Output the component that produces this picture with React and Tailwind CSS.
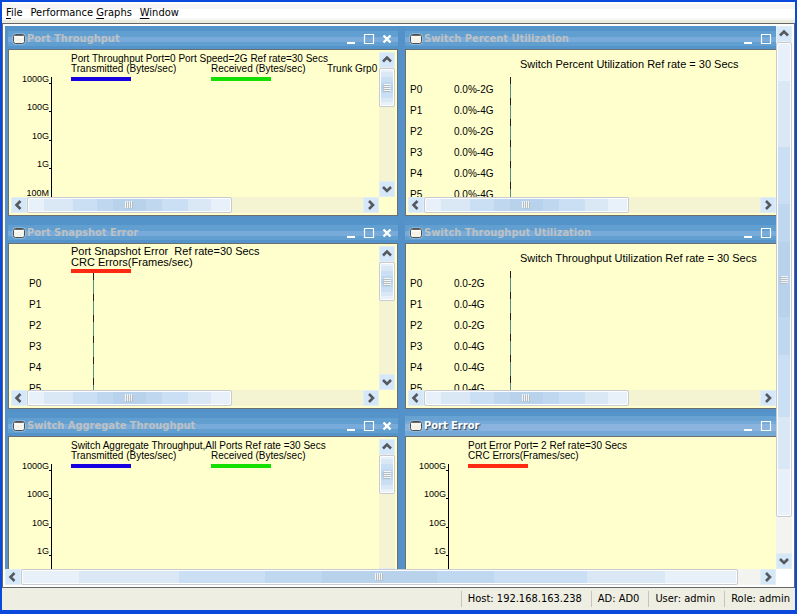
import React from "react";
import clsx from "clsx";

const AXIS = ["1000G", "100G", "10G", "1G", "100M"];

const PORTS = [
  { name: "P0", speed: "2G" },
  { name: "P1", speed: "4G" },
  { name: "P2", speed: "2G" },
  { name: "P3", speed: "4G" },
  { name: "P4", speed: "4G" },
  { name: "P5", speed: "4G" },
];

const TRAFFIC = [
  { label: "Transmitted (Bytes/sec)", color: "bg-[#1400e0]" },
  { label: "Received (Bytes/sec)", color: "bg-[#14e000]" },
];

const CRC = [{ label: "CRC Errors(Frames/sec)", color: "bg-[#ff2a12]" }];

const ARROWS = {
  up: "M4 9.5 8 5.5l4 4",
  down: "M4 6l4 4 4-4",
  left: "M9.5 4 5.5 8l4 4",
  right: "M6 4l4 4-4 4",
};

function ArrowButton({ dir }) {
  return (
    <button aria-label={`Scroll ${dir}`} className="w-4 h-4 shrink-0 bg-[#d5e8fa] border border-[#e4eef0] flex items-center justify-center">
      <svg viewBox="0 0 16 16" className="w-4 h-4 shrink-0">
        <path d={ARROWS[dir]} fill="none" stroke="#55595e" strokeWidth="2.6" />
      </svg>
    </button>
  );
}

function Grip({ vertical }) {
  return (
    <svg viewBox="0 0 8 8" className={clsx("w-2 h-2 shrink-0", vertical && "rotate-90")}>
      <path d="M.5 0v7M2.5 0v7M4.5 0v7M6.5 0v7" stroke="#f4f4f0" />
      <path d="M1.5 1v7M3.5 1v7M5.5 1v7M7.5 1v7" stroke="#b4bcc4" />
    </svg>
  );
}

function HScroll({ thumb, track }) {
  return (
    <div className="flex h-4 min-w-0">
      <ArrowButton dir="left" />
      <div className={clsx("flex-1 min-w-0", track)}>
        <div
          className={clsx(
            "h-4 rounded-[2px] border border-[#c9cbd0] shadow-[inset_0_0_0_1px_#fcfdff] flex items-center justify-center",
            "bg-[linear-gradient(to_right,#e8f0fa_0_8%,#dae8f6_8%_22%,#cadff3_22%_34%,#c0d8ef_34%_42%,#b9d2ec_42%_58%,#c0d8ef_58%_66%,#cadff3_66%_79%,#dae8f6_79%_90%,#e8f0fa_90%)]",
            thumb
          )}
        >
          <Grip />
        </div>
      </div>
      <ArrowButton dir="right" />
    </div>
  );
}

function VScroll({ thumb, track }) {
  return (
    <div className="flex flex-col w-4 min-h-0">
      <ArrowButton dir="up" />
      <div className={clsx("flex-1 min-h-0", track)}>
        <div
          className={clsx(
            "w-4 rounded-[2px] border border-[#c9cbd0] shadow-[inset_0_0_0_1px_#fcfdff] flex items-center justify-center",
            "bg-[linear-gradient(to_bottom,#e8f0fa_0_8%,#dae8f6_8%_22%,#cadff3_22%_34%,#c0d8ef_34%_42%,#b9d2ec_42%_58%,#c0d8ef_58%_66%,#cadff3_66%_79%,#dae8f6_79%_90%,#e8f0fa_90%)]",
            thumb
          )}
        >
          <Grip vertical />
        </div>
      </div>
      <ArrowButton dir="down" />
    </div>
  );
}

function TitleBar({ title, active }) {
  return (
    <div
      className={clsx(
        "h-[23px] pt-[3px] pl-1 pr-0.5 flex items-center text-white",
        active
          ? "bg-[linear-gradient(#5593cb_0_3px,#68a2d3_3px_8px,#74a9d8_8px_11px,#8ab4de_11px_18px,#74a9d8_18px)]"
          : "bg-[linear-gradient(#5593cb_0_5px,#619fd1_5px_11px,#78abda_11px_16px,#619fd1_16px_20px,#5593cb_20px)]"
      )}
    >
      <svg viewBox="0 0 14 12" className="w-3.5 h-3 shrink-0">
        <rect x=".5" y=".5" width="13" height="11" rx="3" fill="#a9cbe8" />
        <rect x="1.500" y="1.500" width="11" height="9" rx="2" fill="#f4f3ea" stroke="#4c5055" />
        <path d="M2.500 2.500h9" stroke="#6b6b66" />
        <path d="M3 4h8" stroke="#fff" />
      </svg>
      <h2
        className={clsx(
          "flex-1 pl-px text-[11px] leading-4 font-bold whitespace-nowrap",
          active ? "text-white [text-shadow:1px_1px_1px_#24405c]" : "text-[#bdc1c4]"
        )}
      >
        {title}
      </h2>
      <button aria-label="Minimize" className="w-[18px] h-4 flex items-center justify-center">
        <svg viewBox="0 0 12 12" className="w-3 h-3"><path d="M2 10h8" stroke="currentColor" strokeWidth="2" /></svg>
      </button>
      <button aria-label="Maximize" className="w-[18px] h-4 flex items-center justify-center">
        <svg viewBox="0 0 12 12" className="w-3 h-3"><path d="M1.5 1.500v9h9v-9M1 1.500h10" fill="none" stroke="currentColor" strokeWidth="1.2" /></svg>
      </button>
      <button aria-label="Close" className="w-[18px] h-4 flex items-center justify-center">
        <svg viewBox="0 0 12 12" className="w-3 h-3"><path d="M2.500 2.500l7 7M9.500 2.500l-7 7" stroke="currentColor" strokeWidth="2.4" /></svg>
      </button>
    </div>
  );
}

function Frame({ title, active, children }) {
  return (
    <section className="flex flex-col min-w-0 pl-[3px] pr-1 pb-1 bg-[#5491c9]">
      <TitleBar title={title} active={active} />
      <div className="flex-1 min-h-0 border border-[#6b6f70] bg-[#ffffce] p-0.5 grid grid-cols-[minmax(0,1fr)_16px] grid-rows-[minmax(0,1fr)_16px]">
        <div className="overflow-hidden mr-px text-[10px] leading-[10px] text-black whitespace-nowrap">{children}</div>
        <VScroll thumb="h-[39px]" track="bg-[#f4f4d2]" />
        <HScroll thumb="w-[61%]" track="bg-[#f4f4d2]" />
      </div>
    </section>
  );
}

function Legend({ series, note, barGap = "mt-[3px]" }) {
  return (
    <div className="flex">
      {series.map((s) => (
        <div key={s.label} className="w-[140px] shrink-0">
          <p>{s.label}</p>
          <div className={clsx("w-[60px] h-1", barGap, s.color)} />
        </div>
      ))}
      {note && <p className="-ml-6">{note}</p>}
    </div>
  );
}

function TimeChart({ heading, series, note }) {
  return (
    <div className="flex pt-0.5">
      <div className="w-10 h-[143px] mt-px flex flex-col">
        {AXIS.map((label) => (
          <div key={label} className="flex-1 flex items-end justify-end">
            <span className="text-[9px]">{label}</span>
            <span className="w-0.5 h-px bg-black" />
          </div>
        ))}
      </div>
      <div className="w-px mt-[23px] bg-black" />
      <div className="pl-[19px]">
        <p>{heading}</p>
        <Legend series={series} note={note} />
      </div>
    </div>
  );
}

function PortLine() {
  return <div className="w-px bg-[repeating-linear-gradient(#222_0_7px,#5a9080_7px_21px)]" />;
}

function SnapshotChart() {
  return (
    <div>
      <div className="pl-[60px] text-[11px] leading-[11px]">
        <p>Port Snapshot Error&nbsp; Ref rate=30 Secs</p>
        <Legend series={CRC} barGap="mt-px" />
      </div>
      <div className="flex">
        <ul className="w-[82px] pl-[18px]">
          {PORTS.map((p) => (
            <li key={p.name} className="leading-[21px]">{p.name}</li>
          ))}
        </ul>
        <PortLine />
      </div>
    </div>
  );
}

function UtilizationChart({ heading, value }) {
  return (
    <div>
      <p className="pl-28 text-[11px] leading-[25px]">{heading}</p>
      <div className="flex">
        <ul className="w-[102px] pl-0.5 pt-0.5">
          {PORTS.map((p) => (
            <li key={p.name} className="flex leading-[21px]">
              <span className="w-11">{p.name}</span>
              <span>{value}-{p.speed}</span>
            </li>
          ))}
        </ul>
        <PortLine />
      </div>
    </div>
  );
}

function MenuItem({ children }) {
  return <button className="px-1 leading-5 [&_u]:underline-offset-2">{children}</button>;
}

export default function App() {
  return (
    <div className="h-screen flex flex-col bg-[#eeeee2] border-2 border-b-4 border-[#0a49dc] font-['DejaVu_Sans_Condensed','DejaVu_Sans',sans-serif] text-[11px] text-black">
      {/* Menu */}
      <nav className="h-[21px] shrink-0 flex bg-[linear-gradient(#fdfdfd_0_2px,#f5f5f5_2px_7px,#fff_7px_16px,#f7f7f7_16px_18px,#ecece0_18px)]">
        <MenuItem><u>F</u>ile</MenuItem>
        <MenuItem>Performance <u>G</u>raphs</MenuItem>
        <MenuItem><u>W</u>indow</MenuItem>
      </nav>

      {/* Desktop */}
      <main className="flex-1 min-h-0 border border-[#666] bg-white p-0.5 grid grid-cols-[minmax(0,1fr)_16px] grid-rows-[minmax(0,1fr)_16px]">
        <div className="overflow-hidden bg-[#5491c9] font-['Liberation_Sans',Arial,sans-serif] [&_h2]:font-['DejaVu_Sans_Condensed','DejaVu_Sans',sans-serif]">
          <div className="w-full min-w-[794px] grid grid-cols-2 grid-rows-[194px_193px_194px]">
            <Frame title="Port Throughput">
              <TimeChart heading="Port Throughput Port=0 Port Speed=2G Ref rate=30 Secs" series={TRAFFIC} note="Trunk Grp0" />
            </Frame>
            <Frame title="Switch Percent Utilization">
              <UtilizationChart heading="Switch Percent Utilization Ref rate = 30 Secs" value="0.0%" />
            </Frame>
            <Frame title="Port Snapshot Error">
              <SnapshotChart />
            </Frame>
            <Frame title="Switch Throughput Utilization">
              <UtilizationChart heading="Switch Throughput Utilization Ref rate = 30 Secs" value="0.0" />
            </Frame>
            <Frame title="Switch Aggregate Throughput">
              <TimeChart heading="Switch Aggregate Throughput,All Ports Ref rate =30 Secs" series={TRAFFIC} />
            </Frame>
            <Frame title="Port Error" active>
              <TimeChart heading="Port Error Port= 2 Ref rate=30 Secs" series={CRC} />
            </Frame>
          </div>
        </div>
        <VScroll thumb="h-[93%]" track="bg-[#f3f3f0]" />
        <HScroll thumb="w-[97%]" track="bg-[#f3f3f0]" />
      </main>

      {/* Status bar */}
      <footer className="h-[22px] shrink-0 flex items-center justify-end leading-4">
        <span className="border-l border-[#c4c4c0] pl-1.5 pr-[9px]">Host: 192.168.163.238</span>
        <span className="border-l border-[#c4c4c0] pl-1.5 pr-[9px]">AD: AD0</span>
        <span className="border-l border-[#c4c4c0] pl-1.5 pr-[9px]">User: admin</span>
        <span className="border-l border-[#c4c4c0] pl-1.5 pr-[5px]">Role: admin</span>
      </footer>
    </div>
  );
}
